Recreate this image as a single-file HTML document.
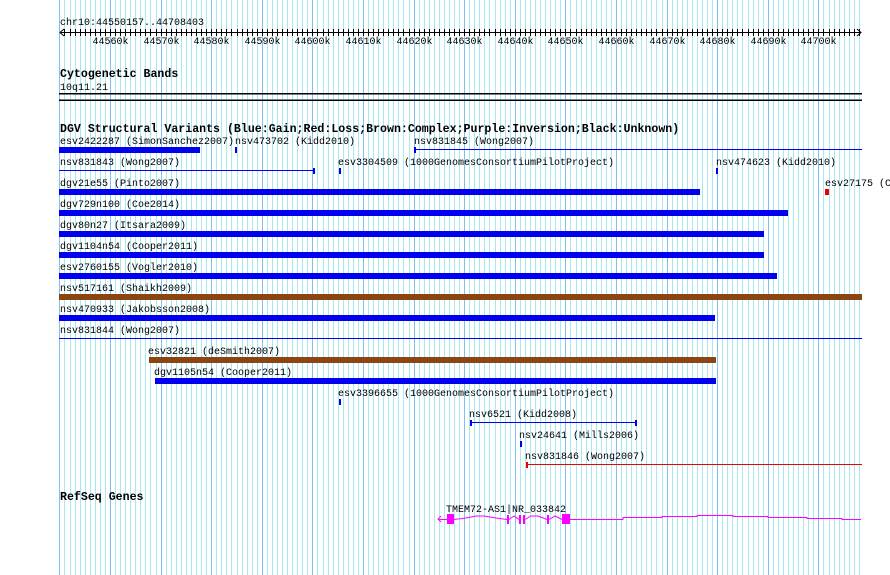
<!DOCTYPE html>
<html><head><meta charset="utf-8"><style>
html,body{margin:0;padding:0;background:#fff;}
svg{display:block;}
text{font-family:"Liberation Mono","DejaVu Sans Mono",monospace;font-size:10px;fill:#000;}
.b{font-weight:bold;font-size:11.6px;}
</style></head><body>
<svg id="s" width="890" height="575" viewBox="0 0 890 575" xmlns="http://www.w3.org/2000/svg" shape-rendering="crispEdges">
<g id="grid"></g>
<g id="ruler" stroke="#000"></g>
<text x="60" y="25">chr10:44550157..44708403</text>
<line x1="61" y1="32.5" x2="861" y2="32.5" stroke="#000"/>
<polyline points="64,29 60,32.5 64,36" fill="none" stroke="#000" shape-rendering="auto"/>
<polyline points="857,29 861,32.5 857,36" fill="none" stroke="#000" shape-rendering="auto"/>
<g id="labels"></g>
<text class="b" x="60" y="77">Cytogenetic Bands</text>
<text x="60" y="90">10q11.21</text>
<rect x="59" y="93" width="803" height="1.3" fill="#000"/>
<rect x="59" y="99.6" width="803" height="1.3" fill="#000"/>
<text class="b" x="60" y="132">DGV Structural Variants (Blue:Gain;Red:Loss;Brown:Complex;Purple:Inversion;Black:Unknown)</text>

<text x="60" y="144">esv2422287 (SimonSanchez2007)</text>
<rect x="59" y="147" width="141" height="6" fill="#0000ee"/>
<text x="235" y="144">nsv473702 (Kidd2010)</text>
<rect x="235" y="147" width="2" height="6" fill="#0000ee"/>
<text x="414" y="144">nsv831845 (Wong2007)</text>
<rect x="414" y="147" width="2" height="6" fill="#0000ee"/>
<rect x="414" y="149" width="448" height="1" fill="#0000ee"/>

<text x="60" y="165">nsv831843 (Wong2007)</text>
<rect x="59" y="170" width="255" height="1" fill="#0000ee"/>
<rect x="313" y="168" width="2" height="6" fill="#0000ee"/>
<text x="338" y="165">esv3304509 (1000GenomesConsortiumPilotProject)</text>
<rect x="339" y="168" width="2" height="6" fill="#0000ee"/>
<text x="716" y="165">nsv474623 (Kidd2010)</text>
<rect x="716" y="168" width="2" height="6" fill="#0000ee"/>

<text x="60" y="186">dgv21e55 (Pinto2007)</text>
<rect x="59" y="189" width="641" height="6" fill="#0000ee"/>
<text x="825" y="186">esv27175 (C</text>
<rect x="825" y="189" width="4" height="6" fill="#ee0000"/>

<text x="60" y="207">dgv729n100 (Coe2014)</text>
<rect x="59" y="210" width="729" height="6" fill="#0000ee"/>
<text x="60" y="228">dgv80n27 (Itsara2009)</text>
<rect x="59" y="231" width="705" height="6" fill="#0000ee"/>
<text x="60" y="249">dgv1104n54 (Cooper2011)</text>
<rect x="59" y="252" width="705" height="6" fill="#0000ee"/>
<text x="60" y="270">esv2760155 (Vogler2010)</text>
<rect x="59" y="273" width="718" height="6" fill="#0000ee"/>
<text x="60" y="291">nsv517161 (Shaikh2009)</text>
<rect x="59" y="294" width="803" height="6" fill="#8b4513"/>
<text x="60" y="312">nsv470933 (Jakobsson2008)</text>
<rect x="59" y="315" width="656" height="6" fill="#0000ee"/>
<text x="60" y="333">nsv831844 (Wong2007)</text>
<rect x="59" y="338" width="803" height="1" fill="#0000ee"/>

<text x="148" y="354">esv32821 (deSmith2007)</text>
<rect x="149" y="357" width="567" height="6" fill="#8b4513"/>
<text x="154" y="375">dgv1105n54 (Cooper2011)</text>
<rect x="155" y="378" width="561" height="6" fill="#0000ee"/>
<text x="338" y="396">esv3396655 (1000GenomesConsortiumPilotProject)</text>
<rect x="339" y="399" width="2" height="6" fill="#0000ee"/>
<text x="469" y="417">nsv6521 (Kidd2008)</text>
<rect x="470" y="422" width="166" height="1" fill="#0000ee"/>
<rect x="470" y="420" width="2" height="6" fill="#0000ee"/>
<rect x="635" y="420" width="2" height="6" fill="#0000ee"/>
<text x="519" y="438">nsv24641 (Mills2006)</text>
<rect x="520" y="441" width="2" height="6" fill="#0000ee"/>
<text x="525" y="459">nsv831846 (Wong2007)</text>
<rect x="526" y="464" width="336" height="1" fill="#ee0000"/>
<rect x="526" y="462" width="2" height="6" fill="#ee0000"/>

<text class="b" x="60" y="500">RefSeq Genes</text>
<text x="446" y="512">TMEM72-AS1|NR_033842</text>
<g fill="#ff00ff" stroke="none">
<polyline points="441,516 438,519 441,522" fill="none" stroke="#ff00ff" shape-rendering="auto"/>
<rect x="438" y="519" width="9" height="1"/>
<rect x="447" y="514" width="7" height="10"/>
<rect x="507" y="515" width="2" height="9"/>
<rect x="519" y="515" width="2" height="9"/>
<rect x="523" y="515" width="2" height="9"/>
<rect x="547" y="515" width="2" height="9"/>
<rect x="562" y="514" width="8" height="10"/>
</g>
<polyline fill="none" stroke="#ff00ff" stroke-width="1" shape-rendering="auto" points="454,519.5 466,518 476,516 484,516 496,518 507,519.5 M"/>
<polyline fill="none" stroke="#ff00ff" shape-rendering="auto" points="509,519.5 514,516 519,519.5"/>
<polyline fill="none" stroke="#ff00ff" shape-rendering="auto" points="525,519.5 531,516 538,516 547,519.5"/>
<polyline fill="none" stroke="#ff00ff" shape-rendering="auto" points="549,519.5 555,516 562,519.5"/>
<polyline fill="none" stroke="#ff00ff" points="570,519.5 623,519.5 623,517.5 662,517.5 662,516.5 697,516.5 697,515.5 733,515.5 733,516.5 768,516.5 768,517.5 807,517.5 807,518.5 842,518.5 842,519.5 861,519.5"/>
</svg>
<script>
(function(){
var ns="http://www.w3.org/2000/svg";
var g=document.getElementById("grid"),r=document.getElementById("ruler"),l=document.getElementById("labels");
for(var k=0;k<=158;k++){
 var x=Math.round(59.4+5.06*k);
 var rc=document.createElementNS(ns,"rect");
 rc.setAttribute("x",x);rc.setAttribute("y",0);rc.setAttribute("width",1);rc.setAttribute("height",575);
 rc.setAttribute("fill",k%10==0?"#80c0f0":"#a8e8f0");
 g.appendChild(rc);
 if(k>0){
 var t=document.createElementNS(ns,"rect");
 t.setAttribute("x",x);t.setAttribute("y",29);t.setAttribute("width",1);t.setAttribute("height",7);t.setAttribute("fill","#000");t.setAttribute("stroke","none");
 r.appendChild(t);}
 if(k%10==0&&k>0){
  var tx=document.createElementNS(ns,"text");
  tx.setAttribute("x",x+0.5);tx.setAttribute("y",44);tx.setAttribute("text-anchor","middle");
  tx.textContent=(44550+k)+"k";
  l.appendChild(tx);
 }
}
})();
</script>
</body></html>
